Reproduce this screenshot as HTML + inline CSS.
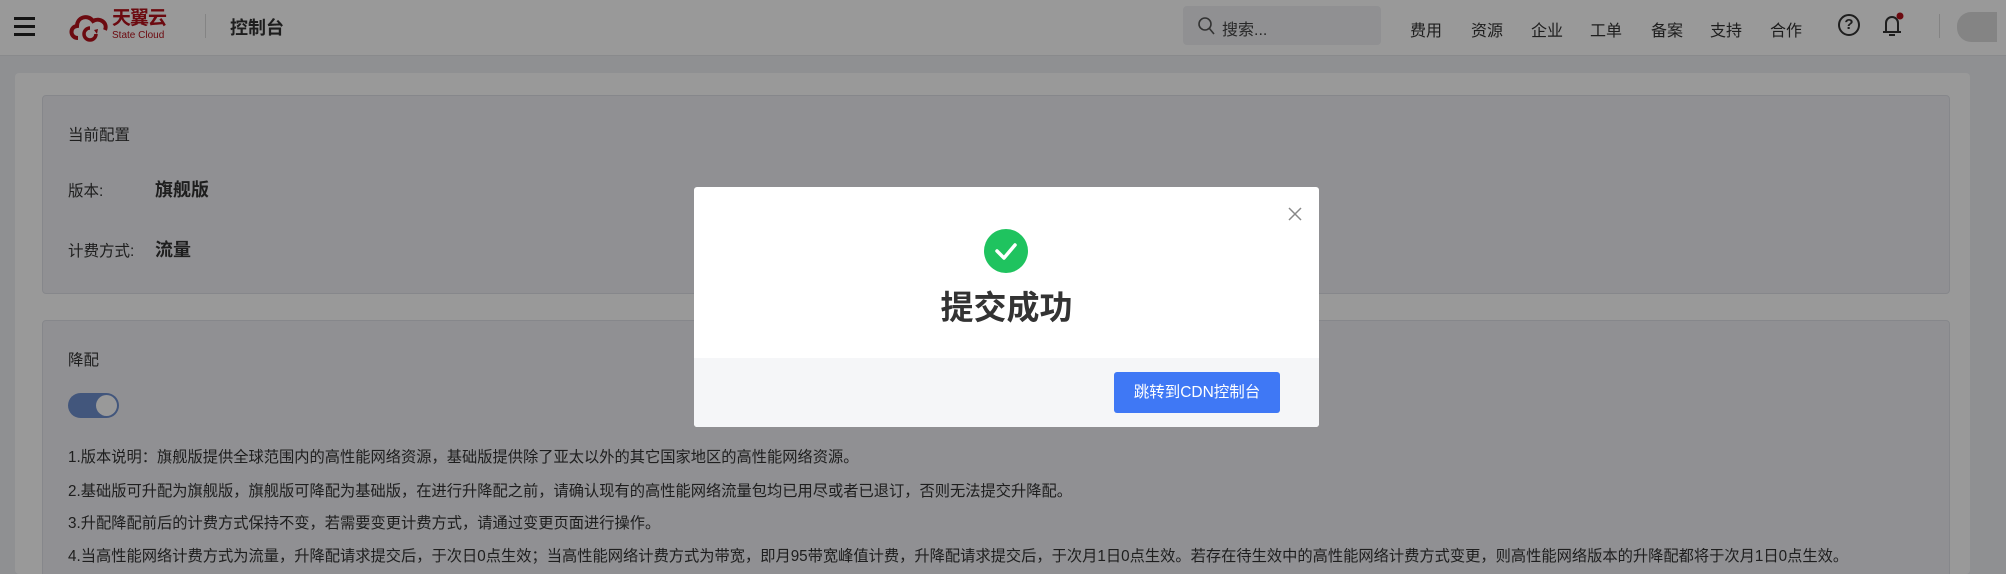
<!DOCTYPE html>
<html style="overflow:hidden;height:574px"><head><meta charset="utf-8"><style>
*{margin:0;padding:0;box-sizing:border-box}
body{width:2006px;height:574px;overflow:hidden;background:#eef0f4;font-family:"Liberation Sans","Noto Sans CJK SC",sans-serif;color:#333;position:relative}
.hd{position:absolute;left:0;top:0;width:2006px;height:56px;background:#fff;border-bottom:1px solid #e4e6ea}
.a{position:absolute;white-space:nowrap}
.nav{font-size:16px;color:#333;top:17px}
.card{position:absolute;left:15px;top:73px;width:1955px;height:501px;background:#fff;border-radius:4px}
.pn{position:absolute;left:42px;width:1908px;background:#f0f1f5;border:1px solid #e0e2e8;border-radius:4px}
.t{font-size:15.5px;color:#333}
.tl{font-size:15.25px;color:#333}
.ov{position:absolute;left:0;top:0;width:2006px;height:574px;background:rgba(0,0,0,0.4)}
.md{position:absolute;left:694px;top:187px;width:625px;height:240px;background:#fff;border-radius:3px;overflow:hidden}
</style></head><body>
<div class="hd">
 <div class="a" style="left:14px;top:17px;width:21px;height:3px;background:#222;box-shadow:0 8px 0 #222,0 16px 0 #222"></div>
 <svg class="a" style="left:68px;top:12px" width="44" height="30" viewBox="0 0 44 30"><path d="M10 26 C2 26 1 15 9 14 C9 5 20 2 25 9 C32 5 40 11 37 18" fill="none" stroke="#b5121b" stroke-width="4"/><path d="M22 16 a6 6 0 1 0 6 6" fill="none" stroke="#b5121b" stroke-width="3.5"/><path d="M26 18 l4 -1 l-1 5z" fill="#b5121b"/></svg>
 <div class="a" style="left:112px;top:9px;font-size:19px;line-height:20px;font-weight:bold;color:#b5121b;letter-spacing:-1px">天翼云</div>
 <div class="a" style="left:112px;top:30px;font-size:10px;line-height:11px;color:#b5121b">State Cloud</div>
 <div class="a" style="left:205px;top:14px;width:1px;height:24px;background:#ddd"></div>
 <div class="a" style="left:230px;top:14px;font-size:18px;font-weight:bold;color:#333">控制台</div>
 <div class="a" style="left:1183px;top:6px;width:198px;height:39px;background:#f0f1f4;border-radius:4px"></div>
 <svg class="a" style="left:1197px;top:16px" width="18" height="20"><circle cx="8" cy="8" r="6" fill="none" stroke="#555" stroke-width="1.6"/><path d="M12 12 l5 6" stroke="#555" stroke-width="1.6"/></svg>
 <div class="a" style="left:1222px;top:16px;font-size:16px;color:#444">搜索...</div>
 <div class="a nav" style="left:1410px">费用</div><div class="a nav" style="left:1471px">资源</div><div class="a nav" style="left:1531px">企业</div><div class="a nav" style="left:1590px">工单</div><div class="a nav" style="left:1651px">备案</div><div class="a nav" style="left:1710px">支持</div><div class="a nav" style="left:1770px">合作</div>
 <div class="a" style="left:1838px;top:14px;width:22px;height:22px;border:2px solid #333;border-radius:50%;font-size:15px;font-weight:bold;text-align:center;line-height:18px">?</div>
 <svg class="a" style="left:1880px;top:12px" width="24" height="26"><path d="M6 20 V11 a6 6 0 0 1 12 0 V20 M3 20 H21 M9 23 H15" fill="none" stroke="#333" stroke-width="2"/><circle cx="20" cy="4" r="3.5" fill="#b5121b"/></svg>
 <div class="a" style="left:1939px;top:14px;width:1px;height:24px;background:#ddd"></div>
 <div class="a" style="left:1957px;top:12px;width:40px;height:30px;background:#ddd;border-radius:14px 0 0 14px"></div>
</div>
<div class="card"></div>
<div class="pn" style="top:95px;height:199px"></div>
<div class="a t" style="left:68px;top:123px">当前配置</div>
<div class="a t" style="left:68px;top:179px">版本:</div>
<div class="a" style="left:155px;top:176px;font-size:18px;font-weight:bold">旗舰版</div>
<div class="a t" style="left:68px;top:239px">计费方式:</div>
<div class="a" style="left:155px;top:236px;font-size:18px;font-weight:bold">流量</div>
<div class="pn" style="top:320px;height:260px"></div>
<div class="a t" style="left:68px;top:348px">降配</div>
<div class="a" style="left:68px;top:393px;width:51px;height:25px;border-radius:13px;background:#6f8fcf"></div>
<div class="a" style="left:96px;top:395px;width:21px;height:21px;border-radius:50%;background:#fff"></div>
<div class="a tl" style="left:68px;top:445px">1.版本说明：旗舰版提供全球范围内的高性能网络资源，基础版提供除了亚太以外的其它国家地区的高性能网络资源。</div>
<div class="a tl" style="left:68px;top:479px">2.基础版可升配为旗舰版，旗舰版可降配为基础版，在进行升降配之前，请确认现有的高性能网络流量包均已用尽或者已退订，否则无法提交升降配。</div>
<div class="a tl" style="left:68px;top:511px">3.升配降配前后的计费方式保持不变，若需要变更计费方式，请通过变更页面进行操作。</div>
<div class="a tl" style="left:68px;top:544px">4.当高性能网络计费方式为流量，升降配请求提交后，于次日0点生效；当高性能网络计费方式为带宽，即月95带宽峰值计费，升降配请求提交后，于次月1日0点生效。若存在待生效中的高性能网络计费方式变更，则高性能网络版本的升降配都将于次月1日0点生效。</div>
<div class="ov"></div>
<div class="md">
 <svg class="a" style="left:593px;top:19px" width="16" height="16"><path d="M2 2 L14 14 M14 2 L2 14" stroke="#888" stroke-width="1.5"/></svg>
 <div class="a" style="left:290px;top:42px;width:44px;height:44px;border-radius:50%;background:#1fc35f"></div>
 <svg class="a" style="left:290px;top:42px" width="44" height="44"><path d="M13 22 L20 29 L31 16" fill="none" stroke="#fff" stroke-width="3.5" stroke-linecap="round" stroke-linejoin="round"/></svg>
 <div class="a" style="left:0;width:625px;text-align:center;top:99px;font-size:33px;line-height:44px;font-weight:bold;color:#333">提交成功</div>
 <div class="a" style="left:0;top:171px;width:625px;height:69px;background:#f5f6f8"></div>
 <div class="a" style="left:420px;top:185px;width:166px;height:41px;background:#3f78f5;border-radius:3px;color:#fff;font-size:15.5px;text-align:center;line-height:41px">跳转到CDN控制台</div>
</div>
</body></html>
